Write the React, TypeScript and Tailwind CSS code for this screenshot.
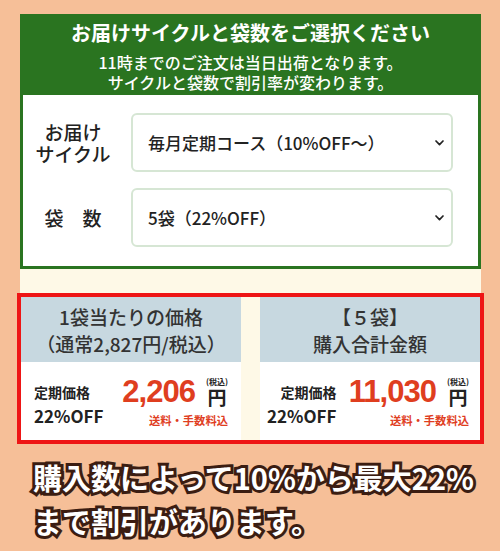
import type { ReactNode } from "react";

const jp = "font-['Noto_Sans_CJK_JP','Noto_Sans',sans-serif]";

function Chevron() {
  return (
    <svg width="9" height="6" viewBox="0 0 9 6" className="pointer-events-none absolute right-[9px] top-1/2 -translate-y-1/2">
      <polyline points="1,1 4.5,4.6 8,1" fill="none" stroke="#222" strokeWidth="1.7" strokeLinecap="round" strokeLinejoin="round" />
    </svg>
  );
}

function SelectBox({ value, options }: { value: string; options: string[] }) {
  return (
    <div className="relative flex-1">
      <select
        defaultValue={value}
        className={`${jp} h-[59px] w-full appearance-none rounded-[6px] border-2 border-[#d6e6d4] bg-white pl-[15px] pr-8 text-[17px] font-medium text-[#222] outline-none`}
      >
        {options.map((o) => (
          <option key={o}>{o}</option>
        ))}
      </select>
      <Chevron />
    </div>
  );
}

function PriceCard({
  head,
  price,
  left,
}: {
  head: ReactNode;
  price: string;
  left: "start" | "end";
}) {
  return (
    <div className="flex w-[220px] flex-col">
      <div className="flex h-[65px] flex-col items-center justify-center bg-[#c7d8e0] text-[19px] font-medium leading-[27px] text-[#333]">
        {head}
      </div>
      <div
        className={`flex h-[78px] items-center justify-between bg-white ${
          left === "start" ? "pl-[13px] pr-[13px]" : "pl-[7px] pr-[11px]"
        }`}
      >
        <div className={`flex flex-col ${left === "start" ? "items-start" : "items-end"} pt-[6px] text-[#222]`}>
          <span className="text-[14px] font-bold leading-[24px]">定期価格</span>
          <span className="text-[17px] font-semibold leading-[24px]">22%OFF</span>
        </div>
        <div className="flex flex-col items-end pt-[1px]">
          <div className="flex items-end gap-[11px]">
            <span className="font-['Liberation_Sans',Arial,sans-serif] text-[31px] font-bold leading-[32px] tracking-[-1px] text-[#df3e1f]">
              {price}
            </span>
            <div className="flex flex-col items-center pb-[1px]">
              <span className="text-[8px] font-bold leading-[10px] text-[#222]">(税込)</span>
              <span className="text-[19px] font-bold leading-[20px] text-[#222]">円</span>
            </div>
          </div>
          <span className="mt-[5px] text-[11.3px] font-bold leading-[14px] text-[#df3e1f]">送料・手数料込</span>
        </div>
      </div>
    </div>
  );
}

export default function App() {
  return (
    <main className={`${jp} min-h-[551px] w-[500px] bg-[#f6bf98] pt-[14px]`}>
      <div className="mx-[20px] w-[461px] bg-[#fef9e7]">
        <div className="border-[3px] border-[#2a7420] bg-[#2a7420]">
          <div className="flex flex-col items-center pb-[3px] pt-[2px] text-white">
            <h1 className="text-[20px] font-bold leading-[28px]">お届けサイクルと袋数をご選択ください</h1>
            <p className="mt-[5px] text-[16px] font-medium leading-[20px]">11時までのご注文は当日出荷となります。</p>
            <p className="text-[16px] font-medium leading-[20px]">サイクルと袋数で割引率が変わります。</p>
          </div>
          <div className="flex flex-col gap-[16px] bg-white pb-[19px] pl-[12px] pr-[25px] pt-[18px]">
            <div className="flex items-center gap-[20px]">
              <div className="flex w-[76px] flex-col items-center text-[19px] font-medium leading-[22px] text-[#222]">
                <span>お届け</span>
                <span>サイクル</span>
              </div>
              <SelectBox value="毎月定期コース（10%OFF〜）" options={["毎月定期コース（10%OFF〜）", "隔月定期コース（5%OFF〜）"]} />
            </div>
            <div className="flex items-center gap-[20px]">
              <div className="w-[76px] text-center text-[19px] font-medium leading-[22px] text-[#222]">袋　数</div>
              <SelectBox value="5袋（22%OFF）" options={["1袋（10%OFF）", "2袋（15%OFF）", "3袋（18%OFF）", "5袋（22%OFF）"]} />
            </div>
          </div>
        </div>

        <div className="mx-[-3px] mt-[24px] flex justify-between border-4 border-[#ee1515] bg-[#fef9e7]">
          <PriceCard
            left="start"
            price="2,206"
            head={
              <>
                <span>1袋当たりの価格</span>
                <span>（通常2,827円/税込）</span>
              </>
            }
          />
          <PriceCard
            left="end"
            price="11,030"
            head={
              <>
                <span>【５袋】</span>
                <span>購入合計金額</span>
              </>
            }
          />
        </div>
      </div>

      <p className="mt-[11px] pl-[33px] text-[29px] font-bold leading-[44px] text-white [-webkit-text-stroke:6px_#3b1d12] [paint-order:stroke_fill]">
        購入数によって10%から最大22%
        <br />
        まで割引があります。
      </p>
    </main>
  );
}
